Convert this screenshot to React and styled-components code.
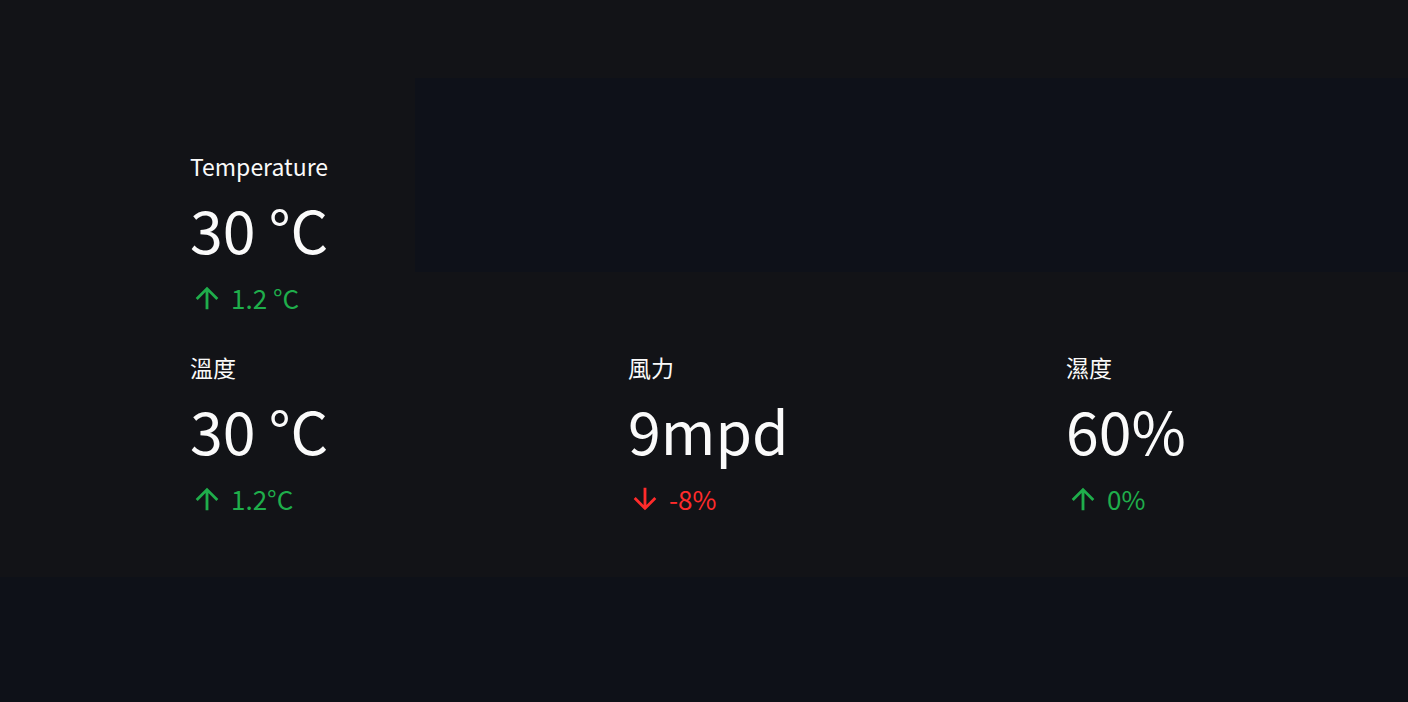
import React from "react";
import styled, { createGlobalStyle } from "styled-components";

const Global = createGlobalStyle`
  html, body { margin: 0; padding: 0; background: #0e1118; }
  body { font-family: "Noto Sans CJK TC", "Noto Sans", sans-serif; color: #fafafa; }
`;

const Main = styled.main`
  background: #121317;
  padding: 78px 0 60px;
`;

const TopRow = styled.section`
  display: grid;
  grid-template-columns: 415px 1fr;
  align-items: start;
`;

const TopCell = styled.div`
  padding: 70px 0 0 190px;
`;

const Panel = styled.div`
  height: 194px;
  background: #0e1119;
`;

const MetricRow = styled.section`
  display: grid;
  grid-template-columns: 438px 438px 1fr;
  padding-left: 190px;
  margin-top: 33px;
`;

const Metric = styled.div`
  display: flex;
  flex-direction: column;
`;

const Label = styled.div`
  font-size: 23px;
  line-height: 36px;
  color: #fafafa;
`;

const Value = styled.div`
  font-size: 59px;
  line-height: 80px;
  margin-top: 5px;
  color: #fafafa;
`;

const Delta = styled.div`
  display: flex;
  align-items: center;
  gap: 7px;
  margin-top: 11px;
  font-size: 26px;
  line-height: 36px;
  color: ${(p) => (p.$down ? "#ff2b2b" : "#1fae4b")};
`;

const Arrow = ({ down }) => (
  <svg width="34" height="34" viewBox="0 0 24 24" fill="currentColor">
    {down ? (
      <path d="M20 12l-1.41-1.41L13 16.17V4h-2v12.17l-5.58-5.59L4 12l8 8 8-8z" />
    ) : (
      <path d="M4 12l1.41 1.41L11 7.83V20h2V7.83l5.58 5.59L20 12l-8-8-8 8z" />
    )}
  </svg>
);

const MetricCard = ({ label, value, delta, down }) => (
  <Metric>
    <Label>{label}</Label>
    <Value>{value}</Value>
    <Delta $down={down}>
      <Arrow down={down} />
      <span>{delta}</span>
    </Delta>
  </Metric>
);

export default function App() {
  return (
    <>
      <Global />
      <Main>
        <TopRow>
          <TopCell>
            <MetricCard label="Temperature" value="30 °C" delta="1.2 °C" />
          </TopCell>
          <Panel />
        </TopRow>
        <MetricRow>
          <MetricCard label="溫度" value="30 °C" delta="1.2°C" />
          <MetricCard label="風力" value="9mpd" delta="-8%" down />
          <MetricCard label="濕度" value="60%" delta="0%" />
        </MetricRow>
      </Main>
    </>
  );
}
